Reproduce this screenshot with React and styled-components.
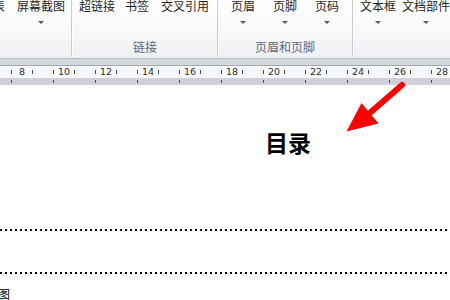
import React from "react";
import styled, { createGlobalStyle } from "styled-components";

const Global = createGlobalStyle`
  html, body { margin: 0; padding: 0; background: #fff; overflow: hidden; }
  #root { width: 450px; height: 300px; }
`;

const Frame = styled.div`
  position: relative;
  width: 450px;
  height: 300px;
  overflow: hidden;
  font-family: "Noto Sans CJK SC", "Noto Sans", sans-serif;
  display: flex;
  flex-direction: column;
`;

const Ribbon = styled.div`
  height: 58px;
  flex: none;
  background: linear-gradient(to bottom, #ffffff 0%, #f9fafb 45%, #eef0f3 100%);
  border-bottom: 1px solid #b8bec7;
  overflow: hidden;
`;

const RibbonRow = styled.div`
  display: flex;
  height: 100%;
  margin-left: -25px;
`;

const Group = styled.div`
  display: flex;
  flex-direction: column;
  justify-content: space-between;
  flex: none;
  padding: 0 ${(p) => p.$pr || 0}px 4px ${(p) => p.$pl || 0}px;
`;

const Buttons = styled.div`
  display: flex;
`;

const Btn = styled.div`
  width: ${(p) => p.$w}px;
  flex: none;
  display: flex;
  flex-direction: column;
  align-items: center;
  white-space: nowrap;
`;

const BtnText = styled.span`
  font-size: 12px;
  line-height: 12px;
  color: #1f1f1f;
`;

const Caret = styled.span`
  margin-top: 9px;
  width: 0;
  height: 0;
  border-left: 3px solid transparent;
  border-right: 3px solid transparent;
  border-top: 3px solid #555b63;
`;

const GroupLabel = styled.div`
  font-size: 12px;
  line-height: 14px;
  color: #5f6876;
  text-align: center;
  white-space: nowrap;
`;

const Sep = styled.div`
  width: 1px;
  flex: none;
  background: #c9cdd3;
  border-right: 1px solid #ffffff;
  margin-bottom: 1px;
`;

const Band = styled.div`
  height: 6px;
  flex: none;
  background: #d5d9de;
  border-bottom: 1px solid #a3a9b1;
`;

const Ruler = styled.div`
  flex: none;
  display: flex;
  flex-direction: column;
  background: #f7f8f9;
`;

const RulerRow = styled.div`
  display: flex;
  padding-left: 1px;
  height: ${(p) => p.$h}px;
  background: ${(p) => p.$bg};
  align-items: center;
`;

const Cell = styled.div`
  width: 42px;
  flex: none;
  display: flex;
  align-items: center;
`;

const TickSlot = styled.div`
  width: ${(p) => (p.$half ? 10.5 : 21)}px;
  flex: none;
  display: flex;
  justify-content: ${(p) => (p.$half ? "flex-end" : "center")};
  &::before {
    content: "";
    width: 1px;
    height: ${(p) => p.$h}px;
    background: #4c4f54;
  }
`;

const Num = styled.div`
  width: 0;
  display: flex;
  justify-content: center;
  font-family: "DejaVu Sans", sans-serif;
  font-size: 9.5px;
  line-height: 10px;
  color: #2d2f33;
  white-space: nowrap;
`;

const Page = styled.div`
  flex: 1;
  background: #fff;
  overflow: hidden;
`;

const DocBody = styled.div`
  width: 576px;
  display: flex;
  flex-direction: column;
`;

const Title = styled.h1`
  margin: 44px 0 0;
  font-size: 23px;
  line-height: 27px;
  font-weight: 700;
  color: #000;
  text-align: center;
  font-family: "Noto Sans CJK SC", sans-serif;
`;

const Leader = styled.div`
  height: 2px;
  margin-top: ${(p) => p.$mt}px;
  background-image: linear-gradient(to right, #000 2px, transparent 2px);
  background-size: 5px 2px;
  background-repeat: repeat-x;
`;

const Line = styled.div`
  margin: 13px 0 0 -2px;
  font-size: 12px;
  line-height: 14px;
  color: #000;
`;

const ArrowSvg = styled.svg`
  position: absolute;
  left: 0;
  top: 0;
  pointer-events: none;
`;

const cms = [8, 10, 12, 14, 16, 18, 20, 22, 24, 26, 28];

export default function App() {
  return (
    <>
      <Global />
      <Frame>
        <Ribbon>
          <RibbonRow>
            <Group>
              <Buttons>
                <Btn $w={36}>
                  <BtnText>图表</BtnText>
                </Btn>
                <Btn $w={60}>
                  <BtnText>屏幕截图</BtnText>
                  <Caret />
                </Btn>
              </Buttons>
            </Group>
            <Sep />
            <Group>
              <Buttons>
                <Btn $w={48}>
                  <BtnText>超链接</BtnText>
                </Btn>
                <Btn $w={32}>
                  <BtnText>书签</BtnText>
                </Btn>
                <Btn $w={64}>
                  <BtnText>交叉引用</BtnText>
                </Btn>
              </Buttons>
              <GroupLabel>链接</GroupLabel>
            </Group>
            <Sep />
            <Group $pl={3} $pr={4}>
              <Buttons>
                <Btn $w={42}>
                  <BtnText>页眉</BtnText>
                  <Caret />
                </Btn>
                <Btn $w={42}>
                  <BtnText>页脚</BtnText>
                  <Caret />
                </Btn>
                <Btn $w={42}>
                  <BtnText>页码</BtnText>
                  <Caret />
                </Btn>
              </Buttons>
              <GroupLabel>页眉和页脚</GroupLabel>
            </Group>
            <Sep />
            <Group>
              <Buttons>
                <Btn $w={48}>
                  <BtnText>文本框</BtnText>
                  <Caret />
                </Btn>
                <Btn $w={48}>
                  <BtnText>文档部件</BtnText>
                  <Caret />
                </Btn>
              </Buttons>
            </Group>
          </RibbonRow>
        </Ribbon>
        <Band />
        <Ruler>
          <RulerRow $h={12} $bg="#f7f8f9">
            {cms.map((n) => (
              <Cell key={n}>
                <TickSlot $h={4} />
                <Num>{n}</Num>
                <TickSlot $h={4} />
              </Cell>
            ))}
          </RulerRow>
          <RulerRow $h={7} $bg="#ced2d8">
            {cms.map((n) => (
              <Cell key={n}>
                <TickSlot $h={3} $half />
              </Cell>
            ))}
          </RulerRow>
        </Ruler>
        <Page>
          <DocBody>
            <Title>目录</Title>
            <Leader $mt={73} />
            <Leader $mt={41} />
            <Line>图</Line>
          </DocBody>
        </Page>
        <ArrowSvg width="450" height="300" viewBox="0 0 450 300">
          <line x1="402" y1="85" x2="371" y2="112" stroke="#ff0000" strokeWidth="6" strokeLinecap="round" />
          <polygon points="346.5,131.5 361.5,103 378.5,123.5" fill="#ff0000" />
        </ArrowSvg>
      </Frame>
    </>
  );
}
